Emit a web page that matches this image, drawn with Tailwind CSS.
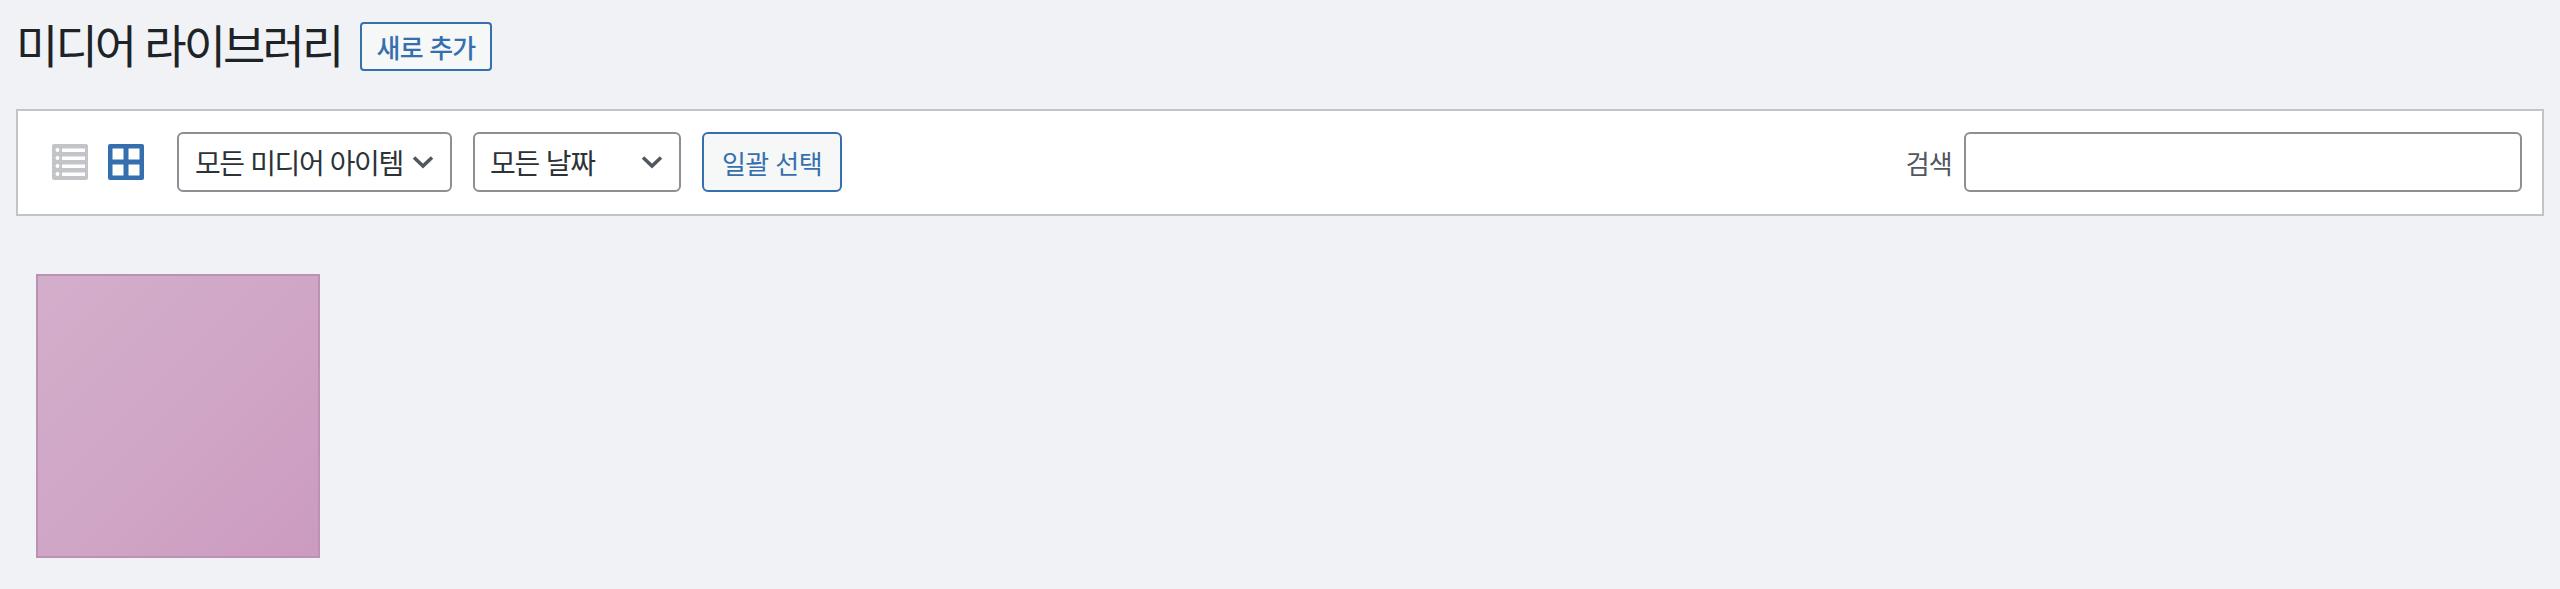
<!DOCTYPE html>
<html lang="ko"><head><meta charset="utf-8"><script src="https://cdn.jsdelivr.net/npm/@tailwindcss/browser@4"></script></head>
<body class="m-0 h-[589px] overflow-hidden bg-[#f0f2f6] font-['Noto_Sans_CJK_KR','Noto_Sans',sans-serif] text-[#1d2327]">
<div class="pl-4 pr-4">
  <div class="flex h-[109px] items-start pt-[22px]">
    <h1 class="m-0 h-[49px] w-[326px] whitespace-nowrap text-[46px] leading-[43px] font-normal tracking-[-2.9px]">미디어 라이브러리</h1>
    <a class="ml-[18px] flex h-[49px] w-[132px] items-center justify-center rounded-[4px] border-2 border-[#366fae] bg-[#f6f7f7] text-[26px] font-medium tracking-[-0.8px] text-[#366fae]">새로 추가</a>
  </div>
  <div class="flex h-[107px] items-center border-2 border-[#c3c4c7] bg-white pb-[1px] pl-[34px] pr-[20px]">
    <svg class="h-9 w-9 shrink-0" viewBox="0 0 36 36"><rect width="36" height="36" rx="2" fill="#c3c4c7"/><g fill="#fff"><rect x="10" y="4.500" width="23" height="3.500"/><rect x="10" y="12.500" width="23" height="3.500"/><rect x="10" y="20.500" width="23" height="3.500"/><rect x="10" y="28.500" width="23" height="3.500"/><circle cx="5.500" cy="6" r="2"/><circle cx="5.500" cy="14" r="2"/><circle cx="5.500" cy="22" r="2"/><circle cx="5.500" cy="30" r="2"/></g></svg>
    <svg class="ml-[20px] h-9 w-9 shrink-0" viewBox="0 0 36 36"><rect width="36" height="36" rx="2" fill="#366fae"/><g fill="#fff"><rect x="4.500" y="4.500" width="11" height="11"/><rect x="20.500" y="4.500" width="11" height="11"/><rect x="4.500" y="20.500" width="11" height="11"/><rect x="20.500" y="20.500" width="11" height="11"/></g></svg>
    <div class="ml-[33px] flex h-[60px] w-[275px] items-center justify-between rounded-[6px] border-2 border-[#8c8f94] pl-[16px] pr-[16px] text-[28px] text-[#2c3338]"><span class="whitespace-nowrap tracking-[-1.4px]">모든 미디어 아이템</span><svg class="h-[14px] w-[22px]" viewBox="0 0 22 14"><path d="M2 2.500 L11 11 L20 2.500" fill="none" stroke="#50575e" stroke-width="3.500"/></svg></div>
    <div class="ml-[21px] flex h-[60px] w-[208px] items-center justify-between rounded-[6px] border-2 border-[#8c8f94] pl-[15px] pr-[16px] text-[28px] text-[#2c3338]"><span class="whitespace-nowrap tracking-[-1.2px]">모든 날짜</span><svg class="h-[14px] w-[22px]" viewBox="0 0 22 14"><path d="M2 2.500 L11 11 L20 2.500" fill="none" stroke="#50575e" stroke-width="3.500"/></svg></div>
    <button class="ml-[21px] flex h-[60px] w-[140px] items-center justify-center rounded-[6px] border-2 border-[#366fae] bg-[#f6f7f7] text-[26px] tracking-[-0.6px] text-[#366fae]">일괄 선택</button>
    <span class="ml-auto text-[26px] tracking-[-0.8px] text-[#50575e]">검색</span>
    <div class="ml-[12px] h-[60px] w-[558px] rounded-[6px] border-2 border-[#8c8f94] bg-white"></div>
  </div>
  <div class="ml-[20px] mt-[58px] h-[284px] w-[284px] border-2 border-[#bb91b4] bg-gradient-to-br from-[#d3aecb] via-[#d0a6c6] to-[#cc9bc0]"></div>
</div>
</body></html>
